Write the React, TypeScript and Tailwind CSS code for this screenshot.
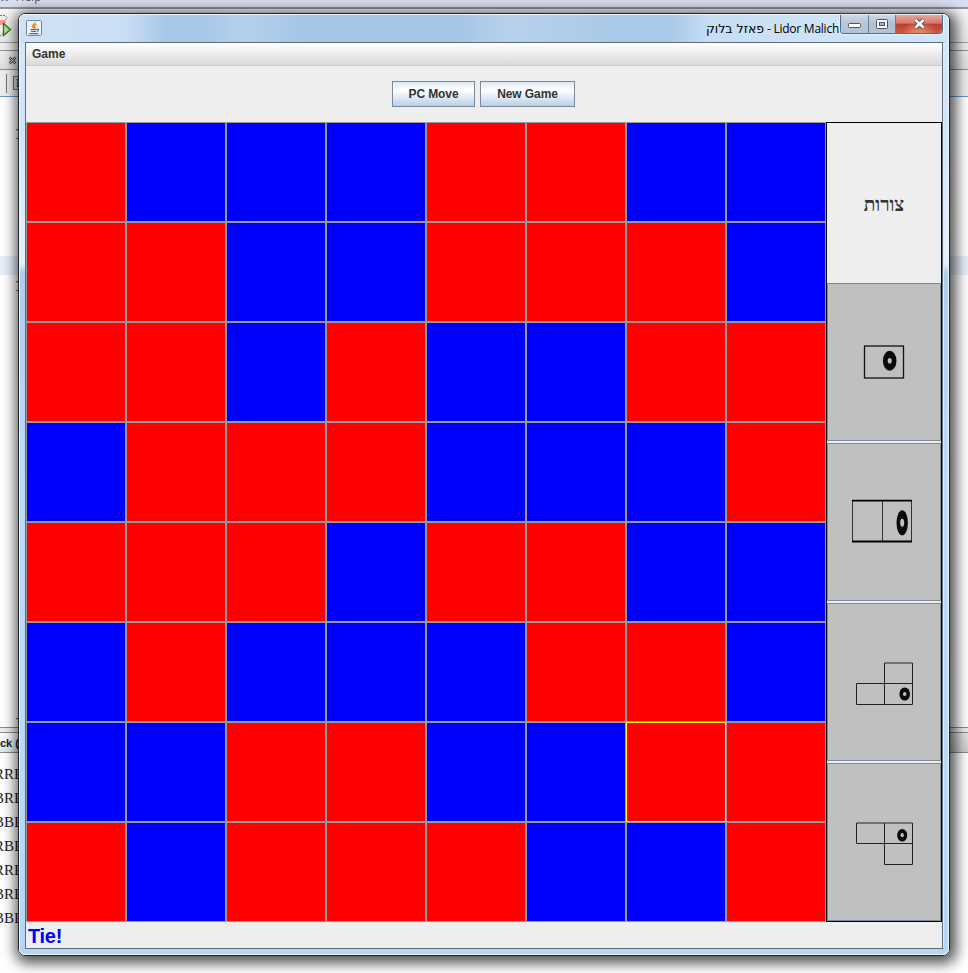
import React from "react";

const rows = [
  "RBBBRRBB",
  "RRBBRRRB",
  "RRBRBBRR",
  "BRRRBBBR",
  "RRRBRRBB",
  "BRBBBRRB",
  "BBRRBBRR",
  "RBRRRBBR",
];

const consoleLines = ["RRE", "BRE", "BBE", "RBE", "RRE", "BRE", "BBE"];

function JavaIcon() {
  return (
    <svg width="16" height="16" viewBox="0 0 16 16" className="block">
      <rect x="0.5" y="0.5" width="15" height="15" rx="1" fill="#eef1f4" stroke="#73879b" />
      <path d="M8.900 2.200C10 4 6.200 4.700 6.600 6.200C6.800 7 7.800 7.400 7.700 8.400M10.500 4.600C9 5 8.200 5.800 8.700 6.800C9 7.600 8.900 8 8.300 8.600" fill="none" stroke="#e8832c" strokeWidth="1.500" />
      <path d="M4.500 9.600H10.500M5 11.500H10M10.800 9.300C13.400 8.700 13 11.200 10.800 11.600M3.200 13.600H12.500" fill="none" stroke="#49728f" strokeWidth="1.200" />
    </svg>
  );
}

function RunIcon() {
  return (
    <svg width="12" height="26" viewBox="0 0 12 26" className="block">
      <path d="M0 .5H5L7 2.500L5 6V14L2 20L0 21" fill="#f4f0f0" stroke="#778" strokeDasharray="2 1" />
      <path d="M0 5H5V10H0Z" fill="#f39a90" />
      <path d="M3.500 8.500V20.500L10.500 14.500Z" fill="#b7e48f" stroke="#287a1c" strokeWidth="1.300" />
    </svg>
  );
}

function Ring({ cx, cy, rx, ry, hx, hy }: { cx: number; cy: number; rx: number; ry: number; hx: number; hy: number }) {
  return (
    <>
      <ellipse cx={cx} cy={cy} rx={rx} ry={ry} fill="#0a0a0a" />
      <ellipse cx={cx} cy={cy} rx={hx} ry={hy} fill="#c0c0c0" />
    </>
  );
}

function ShapeButton({ children }: { children: React.ReactNode }) {
  return (
    <button className="block h-[158px] w-[114px] border border-[#7a8a99] bg-[#c0c0c0]">
      <svg width="112" height="156" viewBox="1 1 112 156" className="block" fill="none">
        {children}
      </svg>
    </button>
  );
}

function Backdrop() {
  return (
    <div className="flex h-[973px] w-[968px] flex-col overflow-hidden bg-white">
      <div className="h-[7px] shrink-0 bg-[#d9def0]">
        <div className="-mt-[11px] whitespace-pre font-['Open_Sans'] text-[12px] leading-[16px] text-[#555]">{"w  Help"}</div>
      </div>
      <div className="h-[2px] shrink-0 bg-[#92939b]" />
      <div className="h-[33px] shrink-0 bg-linear-to-b from-[#f7f7f7] to-[#e9e9e9] pt-[6px]">
        <RunIcon />
      </div>
      <div className="h-px shrink-0 bg-[#a2a2a6]" />
      <div className="h-[7px] shrink-0 bg-[#eeeeee]" />
      <div className="h-px shrink-0 bg-[#8e8e98]" />
      <div className="flex h-[18px] shrink-0 items-center bg-linear-to-b from-[#eeeeee] to-[#dedede] pl-[8px]">
        <svg width="9" height="9" viewBox="0 0 9 9">
          <path d="M1.500 1.500L7.500 7.500M7.500 1.500L1.500 7.500" stroke="#555" strokeWidth="2.600" />
          <path d="M1.500 1.500L7.500 7.500M7.500 1.500L1.500 7.500" stroke="#eee" strokeWidth=".8" />
        </svg>
      </div>
      <div className="h-px shrink-0 bg-[#8b8b98]" />
      <div className="flex h-[26px] shrink-0 items-center bg-[#eeeeee] pl-[6px]">
        <div className="h-[19px] w-px bg-[#777]" />
        <div className="ml-[6px] h-[14px] w-[10px] border border-[#5b7288] bg-[#cfe0ee] text-center font-['Liberation_Serif'] text-[12px] leading-[12px]">I</div>
      </div>
      <div className="h-px shrink-0 bg-[#6b98c4]" />
      <div className="h-[159px] shrink-0 pt-[30px] pl-[15px] font-['Liberation_Mono'] text-[14px] leading-[16px] text-[#5a1bb0]">I</div>
      <div className="h-[19px] shrink-0 bg-[#e8eff9]" />
      <div className="h-[452px] shrink-0 pt-[4px] pl-[15px] font-['Liberation_Mono'] text-[14px] leading-[16px] text-[#5a1bb0]">
        I<div className="pt-[421px]">I</div>
      </div>
      <div className="h-px shrink-0 bg-[#888894]" />
      <div className="h-[4px] shrink-0 bg-[#eeeeee]" />
      <div className="h-px shrink-0 bg-[#888894]" />
      <div className="flex h-[19px] shrink-0 justify-between bg-linear-to-b from-[#e4e4e4] to-[#cbcbcb]">
        <div className="w-[40px] bg-linear-to-b from-white to-[#dbe9f1] font-['Liberation_Sans'] text-[11px] font-bold leading-[20px] text-[#222]">ck (r</div>
      </div>
      <div className="h-px shrink-0 bg-[#888894]" />
      <div className="pt-[9px] font-['Liberation_Serif'] text-[15px] leading-[24px] text-[#222]">
        {consoleLines.map((line, i) => (
          <div key={i} className="-ml-[6px]">{line}</div>
        ))}
      </div>
    </div>
  );
}

function TitleBar() {
  return (
    <div className="flex h-[27px] justify-between">
      <div className="pt-[5px] pl-[6px]">
        <JavaIcon />
      </div>
      <div className="flex">
        <div dir="ltr" className="flex w-[140px] items-baseline justify-end pt-[6px] font-['Open_Sans'] text-[12px] leading-[16px] whitespace-pre text-black">
          <span dir="rtl" className="font-['DejaVu_Sans'] text-[12.500px]">פאזל בלוק</span>
          <span className="tracking-[-0.25px]"> - Lidor Malich</span>
        </div>
        <div className="mr-[5px] ml-[1px] flex h-[19px] overflow-hidden rounded-b-[4px] border border-t-0 border-[#536b85] shadow-[0_0_1px_1px_#e5f1fc]">
          <div className="flex w-[28px] items-center justify-center border-r border-[#6c7e94] bg-linear-to-b from-[#ccd8e7] via-[#b7c5d7] via-48% to-[#b4c5d9]">
            <svg width="13" height="6" className="mt-[4px]">
              <rect x=".5" y=".5" width="12" height="4" rx="1" fill="#fff" stroke="#4b5567" />
            </svg>
          </div>
          <div className="flex w-[27px] items-center justify-center border-r border-[#6c7e94] bg-linear-to-b from-[#ccd8e7] via-[#b0bfd2] via-50% to-[#b4c5d9]">
            <svg width="12" height="11">
              <rect x=".5" y=".5" width="11" height="9" rx="1" fill="#fff" stroke="#4b5567" />
              <rect x="3.500" y="3.500" width="5" height="3" fill="#a7b8cc" stroke="#4b5567" />
            </svg>
          </div>
          <div className="flex w-[46px] items-center justify-center bg-[radial-gradient(ellipse_at_50%_110%,#e49570_0%,transparent_55%),linear-gradient(#e5a99c_0%,#d5796b_46%,#bd3c2a_50%,#c75a43_100%)]">
            <svg width="13" height="12" viewBox="0 0 13 12" fill="none">
              <path d="M2.500 2L10.500 9.500M10.500 2L2.500 9.500" stroke="#4f4858" strokeWidth="4.800" />
              <path d="M2.500 2L10.500 9.500M10.500 2L2.500 9.500" stroke="#fff" strokeWidth="2.800" />
            </svg>
          </div>
        </div>
      </div>
    </div>
  );
}

const swingButton =
  "h-[26px] border border-[#7a8a99] bg-[linear-gradient(#dde8f3_0%,#ffffff_30%,#ffffff_36%,#b8cfe5_100%)] pl-px text-center text-[12px] leading-[25px] font-bold tracking-[-0.1px] text-[#333] whitespace-nowrap";

export default function App() {
  return (
    <div className="relative h-[973px] w-[968px] overflow-hidden font-['Liberation_Sans',sans-serif]">
      <Backdrop />
      <div className="absolute top-[13px] left-[18px] h-[943px] w-[932px] rounded-[7px] border border-[#20252b] bg-[linear-gradient(#d8e8f8_0%,#d0e4fa_12%,#e8f1fb_26.500%,#aecdec_27.500%,#bddcfb_50%,#b5d6f5_100%)] shadow-[2px_3px_14px_4px_rgba(0,0,0,.7)]">
        <div className="h-full rounded-[6px] border border-[#eef6fd] bg-[linear-gradient(90deg,#cfe1f4_0px,#cbdff4_105px,#a8c8e8_145px,#a8c8e8_185px,#b5d0ec_225px,#a4c5e6_290px,#a4c5e6_430px,#b8d1eb_490px,#a9c9e8_600px,#a9c9e8_650px,#c6ddf4_690px,#cee3f7_800px,#cfe4f8_100%)] bg-[length:100%_28px] bg-no-repeat">
          <TitleBar />
          <div className="ml-[5px] h-[907px] w-[919px] border border-[#606b79] border-r-[#dceafa] bg-[#eeeeee]">
            <div className="w-[917px] border-r border-[#606b79]">
              <div className="h-[23px] border-b border-[#cccccc] bg-linear-to-b from-white to-[#dadada] pl-[6px] text-[12px] leading-[22px] font-bold text-[#333]">Game</div>
              <div className="flex h-[56px] justify-center gap-[5px] pt-[15px] pr-[2px]">
                <button className={swingButton + " w-[83px]"}>PC Move</button>
                <button className={swingButton + " w-[95px]"}>New Game</button>
              </div>
              <div className="flex">
                <div className="grid grid-cols-[repeat(8,100px)]">
                  {rows.flatMap((row, r) =>
                    row.split("").map((c, i) => (
                      <div
                        key={r * 8 + i}
                        className={
                          (c === "R" ? "bg-[#ff0000]" : "bg-[#0000ff]") +
                          " h-[100px] border " +
                          (r === 6 && i === 6 ? "border-[#ffff00]" : "border-[#999999]")
                        }
                      />
                    ))
                  )}
                </div>
                <div className="flex h-[800px] w-[116px] flex-col gap-[2px] border border-black">
                  <div className="h-[158px] w-[114px] pt-[71px] text-center font-['Liberation_Serif'] text-[19px] leading-[22px] font-bold text-[#333]">צורות</div>
                  <ShapeButton>
                    <rect x="37.500" y="63" width="39" height="32" stroke="#111" strokeWidth="1.300" />
                    <Ring cx={62.7} cy={77.8} rx={6.8} ry={10} hx={2} hy={2.8} />
                  </ShapeButton>
                  <ShapeButton>
                    <path d="M25.500 57V99M55.500 57V99M84.500 57V99" stroke="#333" />
                    <path d="M25 57.700H85M25 98.500H85" stroke="#000" strokeWidth="1.800" />
                    <Ring cx={75.2} cy={79.8} rx={5.7} ry={12.5} hx={2} hy={4} />
                  </ShapeButton>
                  <ShapeButton>
                    <path d="M57.500 101.500V60H85.500V101.500H29.500V80.500H85.500" stroke="#222" />
                    <Ring cx={77.7} cy={91} rx={5.3} ry={6.6} hx={1.8} hy={2.1} />
                  </ShapeButton>
                  <ShapeButton>
                    <path d="M57.500 60V101.500H85.500V60H29.500V80.500H85.500" stroke="#222" />
                    <Ring cx={75.2} cy={72.2} rx={5} ry={6.3} hx={1.600} hy={2.100} />
                  </ShapeButton>
                </div>
              </div>
              <div className="h-[26px] pl-[2px] text-[20px] leading-[28px] font-bold tracking-[-0.3px] text-[#0000ff]">Tie!</div>
            </div>
          </div>
        </div>
      </div>
    </div>
  );
}
